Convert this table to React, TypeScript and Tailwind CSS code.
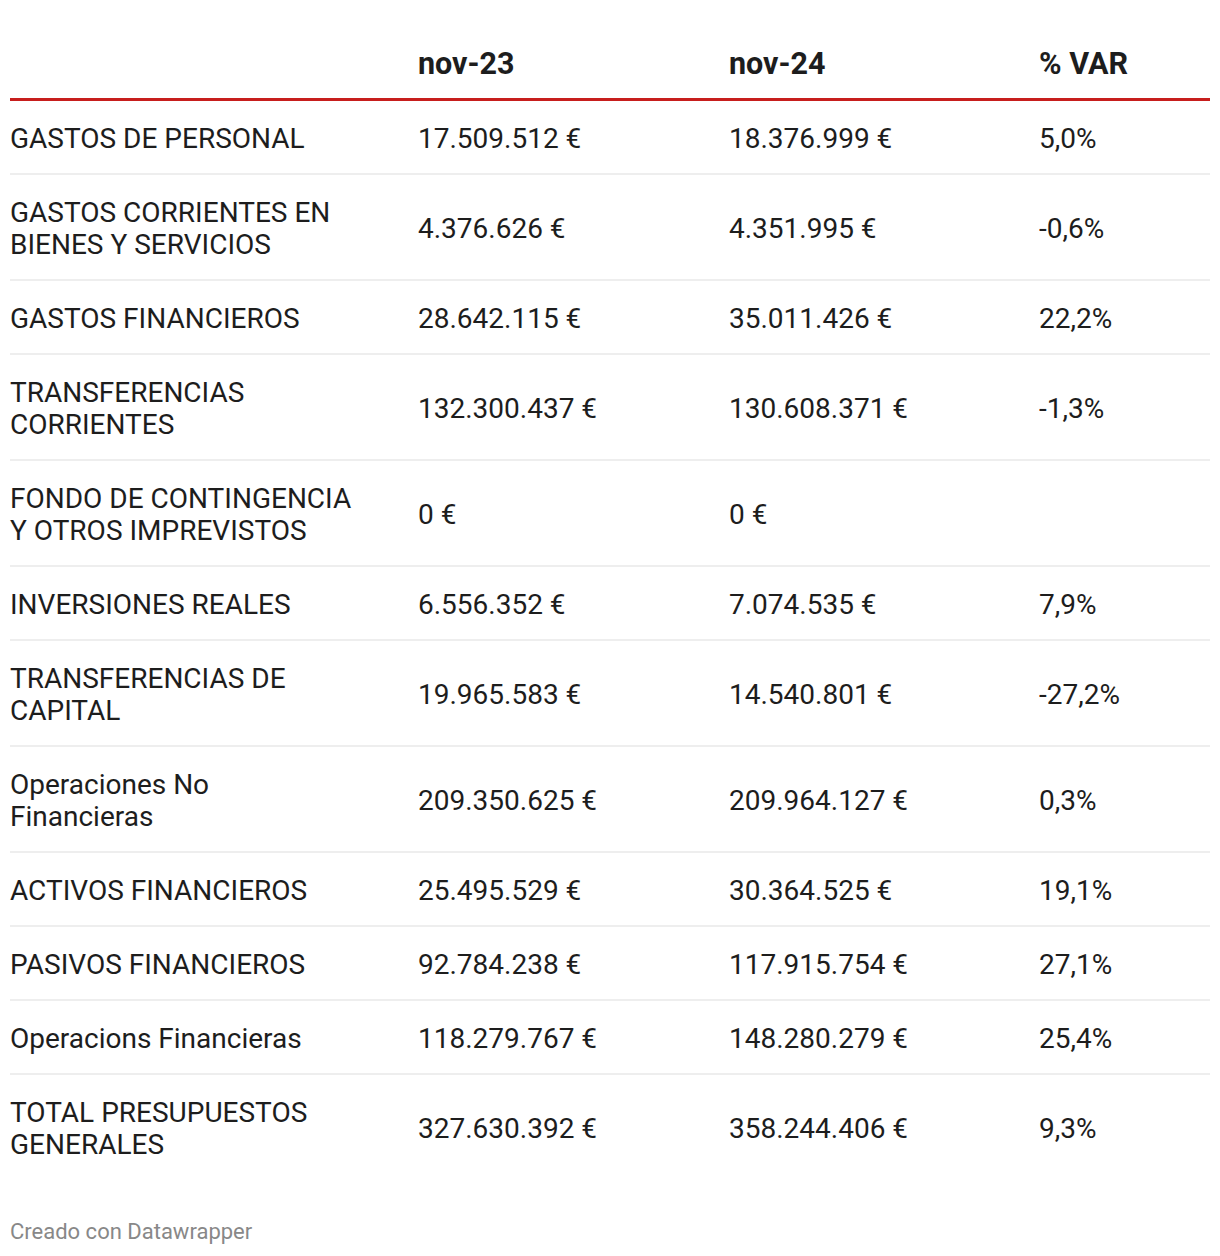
const rows: [string, string, string, string][] = [
  ["GASTOS DE PERSONAL", "17.509.512 €", "18.376.999 €", "5,0%"],
  ["GASTOS CORRIENTES EN BIENES Y SERVICIOS", "4.376.626 €", "4.351.995 €", "-0,6%"],
  ["GASTOS FINANCIEROS", "28.642.115 €", "35.011.426 €", "22,2%"],
  ["TRANSFERENCIAS CORRIENTES", "132.300.437 €", "130.608.371 €", "-1,3%"],
  ["FONDO DE CONTINGENCIA Y OTROS IMPREVISTOS", "0 €", "0 €", ""],
  ["INVERSIONES REALES", "6.556.352 €", "7.074.535 €", "7,9%"],
  ["TRANSFERENCIAS DE CAPITAL", "19.965.583 €", "14.540.801 €", "-27,2%"],
  ["Operaciones No Financieras", "209.350.625 €", "209.964.127 €", "0,3%"],
  ["ACTIVOS FINANCIEROS", "25.495.529 €", "30.364.525 €", "19,1%"],
  ["PASIVOS FINANCIEROS", "92.784.238 €", "117.915.754 €", "27,1%"],
  ["Operacions Financieras", "118.279.767 €", "148.280.279 €", "25,4%"],
  ["TOTAL PRESUPUESTOS GENERALES", "327.630.392 €", "358.244.406 €", "9,3%"],
];

export default function App() {
  return (
    <div
      className="bg-white w-[1220px] min-h-[1256px] px-[10px] text-[#1d1d1d]"
      style={{ fontFamily: "Roboto, 'Liberation Sans', sans-serif" }}
    >
      {/* header */}
      <div className="grid grid-cols-[408px_311px_310px_171px] pt-[48px] pb-[18px] border-b-[3px] border-[#c71e1d] text-[30.5px] leading-[32px] font-bold">
        <div></div>
        <div>nov-23</div>
        <div>nov-24</div>
        <div>% VAR</div>
      </div>

      {/* rows */}
      {rows.map((r, i) => (
        <div
          key={i}
          className={
            "grid grid-cols-[408px_311px_310px_171px] items-center pt-[22px] pb-[18px] text-[28px] leading-[32px] " +
            (i < rows.length - 1 ? "border-b-2 border-[#eeeeee]" : "")
          }
        >
          <div className="pr-[64px]">{r[0]}</div>
          <div>{r[1]}</div>
          <div>{r[2]}</div>
          <div>{r[3]}</div>
        </div>
      ))}

      {/* footer */}
      <div className="pt-[38px] text-[22px] leading-[30px] text-[#888888]">Creado con Datawrapper</div>
    </div>
  );
}
